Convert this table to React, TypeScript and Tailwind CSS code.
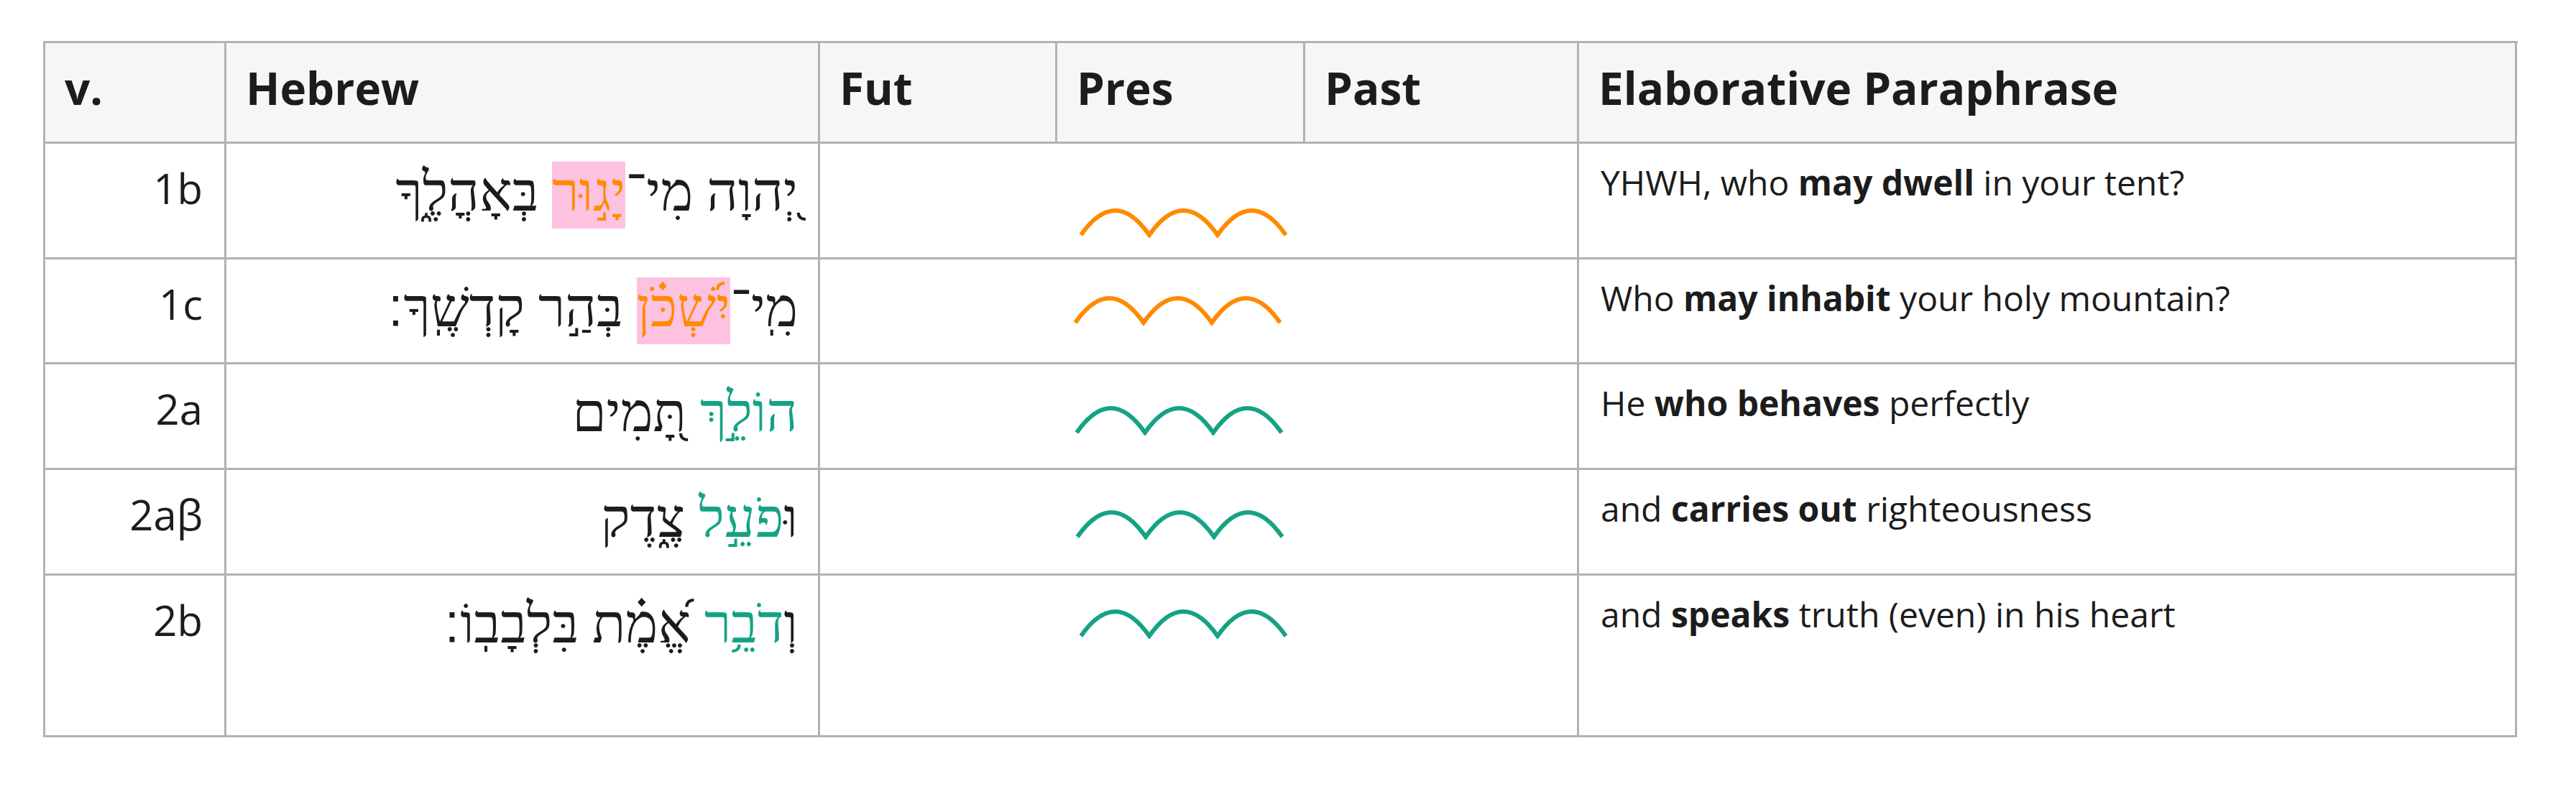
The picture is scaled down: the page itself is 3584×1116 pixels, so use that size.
type Seg = { t: string; tone?: "orange" | "green"; mark?: boolean; sof?: boolean }
type En = { t: string; b?: boolean }

type Row = {
  v: string
  heb: Seg[]
  en: En[]
  wave: string
  rowH: string
  wavePos: string
}

const rows: Row[] = [
  {
    v: "1b",
    heb: [{ t: "יְ֭הוָה מִי־" }, { t: "יָג֣וּר", tone: "orange", mark: true }, { t: " בְּאָהֳלֶ֑ךָ" }],
    en: [{ t: "YHWH, who " }, { t: "may dwell", b: true }, { t: " in your tent?" }],
    wave: "#ff8a00",
    rowH: "h-[161px]",
    wavePos: "pt-[89px] pl-[360px]",
  },
  {
    v: "1c",
    heb: [
      { t: "מִֽי־" },
      { t: "יִ֝שְׁכֹּ֗ן", tone: "orange", mark: true },
      { t: " בְּהַ֣ר קָדְשֶֽׁךָ" },
      { t: "׃", sof: true },
    ],
    en: [{ t: "Who " }, { t: "may inhabit", b: true }, { t: " your holy mountain?" }],
    wave: "#ff8a00",
    rowH: "h-[146px]",
    wavePos: "pt-[50px] pl-[352px]",
  },
  {
    v: "2a",
    heb: [{ t: "הוֹלֵ֣ךְ", tone: "green" }, { t: " תָּ֭מִים" }],
    en: [{ t: "He " }, { t: "who behaves", b: true }, { t: " perfectly" }],
    wave: "#14a384",
    rowH: "h-[147px]",
    wavePos: "pt-[57px] pl-[354px]",
  },
  {
    v: "2aβ",
    heb: [{ t: "וּ" }, { t: "פֹעֵ֣ל", tone: "green" }, { t: " צֶ֑דֶק" }],
    en: [{ t: "and " }, { t: "carries out", b: true }, { t: " righteousness" }],
    wave: "#14a384",
    rowH: "h-[147px]",
    wavePos: "pt-[55px] pl-[355px]",
  },
  {
    v: "2b",
    heb: [{ t: "וְ" }, { t: "דֹבֵ֥ר", tone: "green" }, { t: " אֱ֝מֶ֗ת בִּלְבָבֽוֹ" }, { t: "׃", sof: true }],
    en: [{ t: "and " }, { t: "speaks", b: true }, { t: " truth (even) in his heart" }],
    wave: "#14a384",
    rowH: "h-[225px]",
    wavePos: "pt-[46px] pl-[360px]",
  },
]

const headers = ["v.", "Hebrew", "Fut", "Pres", "Past", "Elaborative Paraphrase"]

function Wave({ color }: { color: string }) {
  return (
    <svg width="292" height="42" viewBox="0 0 292 42" fill="none">
      <path
        d="M3 38 Q50.5 -30 98 38 Q145.5 -30 193 38 Q240.5 -30 288 38"
        stroke={color}
        strokeWidth="6"
        strokeLinejoin="miter"
      />
    </svg>
  )
}

function segClass(s: Seg) {
  let c = ""
  if (s.tone === "orange") c += "text-[#ff8a00] "
  if (s.tone === "green") c += "text-[#14a384] "
  if (s.mark) c += "bg-[#fdc2df] pb-[9px] "
  if (s.sof) c += "font-['DejaVu_Sans',sans-serif] "
  return c
}

function Hebrew({ segs }: { segs: Seg[] }) {
  return (
    <p dir="rtl" className="font-['Liberation_Serif','DejaVu_Sans',serif] text-[76px] leading-[84px]">
      {segs.map((s, i) => (
        <span key={i} className={segClass(s)}>
          {s.t}
        </span>
      ))}
    </p>
  )
}

export default function App() {
  return (
    <div className="min-h-screen bg-white pt-[57px] pl-[60px] font-['Open_Sans',sans-serif] text-[#1c1c1c]">
      <div className="grid w-[3443px] grid-cols-[252px_826px_330px_345px_381px_1305px] border-l-[3px] border-t-[3px] border-[#b2b2b2]">
        {headers.map((h) => (
          <div
            key={h}
            className="h-[140px] border-r-[3px] border-b-[3px] border-[#b2b2b2] bg-[#f6f6f6] pt-[20px] pl-[27px] text-[62px] font-bold leading-[84px]"
          >
            {h}
          </div>
        ))}

        {rows.map((r) => (
          <div key={r.v} className="contents">
            <div className={`${r.rowH} border-r-[3px] border-b-[3px] border-[#b2b2b2] pt-[22px] pr-[30px] text-right text-[58px] leading-[80px]`}>
              {r.v}
            </div>
            <div className={`${r.rowH} border-r-[3px] border-b-[3px] border-[#b2b2b2] pt-[25px] pr-[28px]`}>
              <Hebrew segs={r.heb} />
            </div>
            <div className={`${r.rowH} col-span-3 border-r-[3px] border-b-[3px] border-[#b2b2b2] ${r.wavePos}`}>
              <Wave color={r.wave} />
            </div>
            <div className={`${r.rowH} border-r-[3px] border-b-[3px] border-[#b2b2b2] pt-[21px] pl-[30px] text-[48px] leading-[66px]`}>
              {r.en.map((e, i) => (e.b ? <b key={i} className="font-bold">{e.t}</b> : <span key={i}>{e.t}</span>))}
            </div>
          </div>
        ))}
      </div>
    </div>
  )
}
